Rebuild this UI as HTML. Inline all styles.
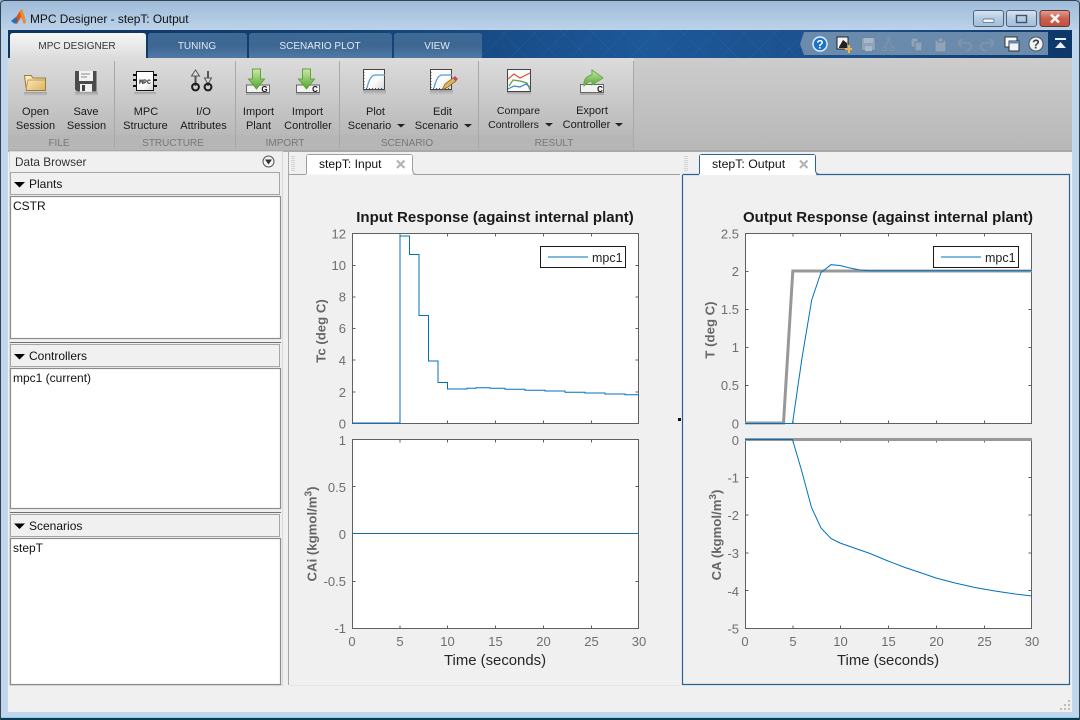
<!DOCTYPE html>
<html><head><meta charset="utf-8"><title>MPC Designer - stepT: Output</title>
<style>
html,body{margin:0;padding:0;background:#c0d6ec;width:1080px;height:720px;overflow:hidden}
svg{display:block;position:absolute;left:0;top:0}
text{font-family:"Liberation Sans",sans-serif}
.rb{font-size:11px;fill:#1a1a1a;text-anchor:middle}
.gl{font-size:10px;fill:#777;text-anchor:middle}
.tb{font-size:10px;fill:#e2eaf3;text-anchor:middle}
.t{font-size:13px;fill:#6e6e6e}
.e{text-anchor:end}
.m{text-anchor:middle}
.xl{font-size:14.9px;fill:#262626;text-anchor:middle}
.ti{font-size:15px;font-weight:bold;fill:#1a1a1a;text-anchor:middle}
.yl{font-size:13.2px;font-weight:bold;fill:#666;text-anchor:middle}
.p{font-size:12px;fill:#111}
.ax{fill:#fff;stroke:#606060;stroke-width:1}
.tk{stroke:#606060;stroke-width:1;fill:none}
.c{fill:none;stroke:#0072bd;stroke-width:1}
.g{fill:none;stroke:#989898;stroke-width:3}
.lb{fill:#fff;stroke:#1a1a1a;stroke-width:1}
.hd{fill:#f0f0f0;stroke:#a6a6a6;stroke-width:1}
.ls{fill:#fff;stroke:#8c8c8c;stroke-width:1.2}
.qg{fill:#8fa4ba;stroke:#6b839c;stroke-width:1}
</style></head><body>
<svg width="1080" height="720" viewBox="0 0 1080 720" xmlns="http://www.w3.org/2000/svg">
<defs>
<linearGradient id="tt" x1="0" y1="0" x2="0" y2="1"><stop offset="0" stop-color="#9fbbd9"/><stop offset="1" stop-color="#bbd2e9"/></linearGradient>
<linearGradient id="strip" x1="0" y1="0" x2="1" y2="0"><stop offset="0" stop-color="#0c3560"/><stop offset=".3" stop-color="#123f73"/><stop offset=".6" stop-color="#1d5899"/><stop offset=".8" stop-color="#1b4f8b"/><stop offset="1" stop-color="#0d3768"/></linearGradient>
<linearGradient id="rib" x1="0" y1="0" x2="0" y2="1"><stop offset="0" stop-color="#dcdcdc"/><stop offset="1" stop-color="#b2b2b2"/></linearGradient>
<linearGradient id="at" x1="0" y1="0" x2="0" y2="1"><stop offset="0" stop-color="#f6f6f6"/><stop offset="1" stop-color="#dddddd"/></linearGradient>
<linearGradient id="it" x1="0" y1="0" x2="0" y2="1"><stop offset="0" stop-color="#3f6a96"/><stop offset=".5" stop-color="#3d6692"/><stop offset="1" stop-color="#4f7aa5"/></linearGradient>
<linearGradient id="fo" x1="0" y1="0" x2="1" y2="1"><stop offset="0" stop-color="#fff6cf"/><stop offset="1" stop-color="#dcb25c"/></linearGradient>
<linearGradient id="ga" x1="0" y1="0" x2="0" y2="1"><stop offset="0" stop-color="#cfe8a8"/><stop offset="1" stop-color="#4fa52f"/></linearGradient>
<linearGradient id="bx" x1="0" y1="0" x2="1" y2="1"><stop offset="0" stop-color="#ffffff"/><stop offset=".6" stop-color="#fafafa"/><stop offset="1" stop-color="#d6d6d6"/></linearGradient>
<linearGradient id="wb" x1="0" y1="0" x2="0" y2="1"><stop offset="0" stop-color="#d7e4f1"/><stop offset=".5" stop-color="#b5cbe1"/><stop offset="1" stop-color="#a3bfdb"/></linearGradient>
<linearGradient id="wc" x1="0" y1="0" x2="0" y2="1"><stop offset="0" stop-color="#e3a091"/><stop offset=".5" stop-color="#c9604e"/><stop offset="1" stop-color="#c0523f"/></linearGradient>
<linearGradient id="sh" x1="0" y1="0" x2="0" y2="1"><stop offset="0" stop-color="#000" stop-opacity=".22"/><stop offset="1" stop-color="#000" stop-opacity="0"/></linearGradient>
</defs>

<!-- window frame -->
<rect x="0" y="0" width="1080" height="720" fill="#bfd6ec"/>
<rect x="0" y="0" width="1080" height="30" fill="url(#tt)"/>
<rect x="0" y="718" width="1080" height="2" fill="#123a52"/>
<path d="M0.5 720V4Q0.5 1 4 0.5H1076Q1079.5 1 1079.5 4V720" fill="none" stroke="#33424f" stroke-width="1"/>
<rect x="1" y="717" width="1078" height="1" fill="#7fd3ea"/>
<rect x="8" y="150" width="1064" height="562" fill="#f0f0f0"/>

<!-- title bar -->
<path d="M11 21L16 17L20 11L22 9L26 22L24 24L21 17L17 24Z" fill="#d9541e"/>
<path d="M20 11L22 9L26 22L24 24L21 17Z" fill="#ef8a2a"/>
<path d="M11 21L16 17L18 20L15 24Z" fill="#2f6ea8"/>
<text x="30" y="23" style="font-size:11.9px" fill="#111">MPC Designer - stepT: Output</text>

<rect x="973.5" y="10.5" width="30" height="16" rx="2.5" fill="url(#wb)" stroke="#4f6478"/>
<rect x="983" y="19" width="11" height="3.5" rx="1" fill="#f4f7fa" stroke="#50667c" stroke-width=".7"/>
<rect x="1006.5" y="10.5" width="30" height="16" rx="2.5" fill="url(#wb)" stroke="#4f6478"/>
<rect x="1016.5" y="15.5" width="10" height="7" fill="none" stroke="#3f5468" stroke-width="1.4"/>
<rect x="1040" y="10.5" width="29.5" height="16" rx="2.5" fill="url(#wc)" stroke="#5d3a38"/>
<path d="M1051 14.5L1059 22.5M1059 14.5L1051 22.5" stroke="#f6f6f6" stroke-width="2.6"/>

<!-- blue strip -->
<rect x="8" y="30" width="1064" height="28" fill="url(#strip)"/>
<g stroke="#3a72ad" stroke-width=".5" fill="none" opacity=".5">
<path d="M480 58L508 30M510 58L538 30M540 58L568 30M570 58L598 30M600 58L628 30M630 58L658 30M660 58L688 30M690 58L718 30M720 58L748 30M750 58L778 30M780 58L808 30"/>
<path d="M500 30L528 58M530 30L558 58M560 30L588 58M590 30L618 58M620 30L648 58M650 30L678 58M680 30L708 58M710 30L738 58M740 30L768 58M770 30L798 58"/>
</g>

<!-- tabs -->
<path d="M148 58V36Q148 33 151 33H244Q247 33 247 36V58Z" fill="url(#it)"/>
<path d="M249 58V36Q249 33 252 33H389Q392 33 392 36V58Z" fill="url(#it)"/>
<path d="M394 58V36Q394 33 397 33H479Q482 33 482 36V58Z" fill="url(#it)"/>
<path d="M10 58V36Q10 33 13 33H143Q146 33 146 36V58Z" fill="url(#at)"/>
<text x="77" y="49" class="tb" style="fill:#333">MPC DESIGNER</text>
<text x="197" y="49" class="tb">TUNING</text>
<text x="320" y="49" class="tb">SCENARIO PLOT</text>
<text x="437" y="49" class="tb">VIEW</text>

<!-- QAT -->
<path d="M800 44L804 32H1048V55H804Z" fill="#6b8bad"/>
<circle cx="820" cy="44" r="7" fill="#1b74c6" stroke="#e8f2fb" stroke-width="1.4"/>
<text x="820" y="48.5" class="m" style="font-size:12px;font-weight:bold" fill="#fff">?</text>
<rect x="837" y="37" width="11" height="12" fill="#f2f2f2" stroke="#222" stroke-width="1"/>
<path d="M839 47L843 40L847 43V48H839Z" fill="#222"/>
<path d="M845 48H848V45H850V48H852V50H850V53H848V50H845Z" fill="#f0b54a"/>
<path d="M861.5 37.5H875.5V50.5H861.5Z" class="qg"/><rect x="864" y="38" width="9" height="5" fill="#a8b8c9"/><rect x="865" y="46" width="7" height="5" fill="#a8b8c9"/>
<path d="M890 37L885 47M887 37L892 47" stroke="#7f95ab" stroke-width="1.2" fill="none"/><circle cx="884.5" cy="49" r="2" fill="none" stroke="#7f95ab"/><circle cx="892.5" cy="49" r="2" fill="none" stroke="#7f95ab"/>
<rect x="911" y="38" width="7" height="9" class="qg"/><rect x="915" y="42" width="7" height="9" class="qg"/>
<rect x="935" y="40" width="11" height="12" class="qg"/><rect x="938" y="38" width="5" height="4" class="qg"/>
<path d="M958 43H968Q971 43 971 47Q971 50 966 51M958 43L962 39M958 43L962 47" fill="none" stroke="#7f95ab" stroke-width="1.8"/>
<path d="M994 43H984Q981 43 981 47Q981 50 986 51M994 43L990 39M994 43L990 47" fill="none" stroke="#7f95ab" stroke-width="1.8"/>
<rect x="1005" y="37" width="12" height="10" fill="#fff" stroke="#333"/>
<rect x="1009" y="41" width="10" height="10" fill="#eef3f8" stroke="#333"/><rect x="1009" y="41" width="10" height="2.5" fill="#5c87b8"/>
<circle cx="1036" cy="44" r="7" fill="#f2f2f2" stroke="#4a5563" stroke-width="1"/>
<text x="1036" y="48.5" class="m" style="font-size:12.5px;font-weight:bold" fill="#33404e">?</text>
<rect x="1055" y="38" width="11" height="2" fill="#e8edf3"/><path d="M1055 48L1060.5 42L1066 48Z" fill="#e8edf3"/>

<!-- ribbon -->
<rect x="8" y="58" width="1064" height="92" fill="url(#rib)"/>
<rect x="8" y="135" width="625" height="15" fill="#b6b6b6"/>
<rect x="634" y="58" width="438" height="92" fill="#bdbdbd"/>
<rect x="634" y="58" width="438" height="92" fill="url(#rib)" opacity=".5"/>
<rect x="8" y="150" width="1064" height="2" fill="#a9a9a9"/>
<g stroke="#a8a8a8" stroke-width="1"><path d="M114.5 61V148M235.5 61V148M339.5 61V148M478.5 61V148M633.5 61V148"/></g>

<!-- ribbon icons -->
<rect x="24" y="92" width="23" height="4" fill="url(#sh)"/>
<path d="M24.5 75.5H31L33 78H45.5V90.5H26.5Z" fill="url(#fo)" stroke="#9c7a3c"/>
<path d="M26 90L28 80H45.5" fill="none" stroke="#c49c4e"/>

<rect x="75" y="92" width="23" height="4" fill="url(#sh)"/>
<path d="M75 71H96.5V91.5H77L75 89.5Z" fill="#4c4c4c"/>
<rect x="79" y="71" width="14" height="10" fill="#f2f2f2"/>
<path d="M81 74H90M81 77H87" stroke="#8a8a8a"/>
<rect x="80" y="84" width="12" height="7.5" fill="#f2f2f2"/><rect x="82" y="85" width="3" height="6" fill="#444"/>

<rect x="134" y="92" width="22" height="3" fill="url(#sh)"/>
<rect x="136.5" y="71.5" width="17" height="19" fill="url(#bx)" stroke="#111"/>
<path d="M133 75H136M133 80H136M133 86H136M154 75H157M154 80H157M154 86H157" stroke="#111" stroke-width="2"/>
<text x="145" y="84" class="m" style="font-size:6.5px;font-weight:bold;font-family:'Liberation Mono',monospace" fill="#111">MPC</text>

<path d="M195.5 86V73M208 86V71" stroke="#555" stroke-width="2"/>
<path d="M191.5 76L195.5 70L199.5 76Z" fill="#ddd" stroke="#555"/>
<path d="M204.5 78L208 84L211.5 78Z" fill="#ddd" stroke="#555"/>
<circle cx="195.5" cy="87" r="3.4" fill="none" stroke="#1a1a1a" stroke-width="2"/>
<circle cx="208" cy="87" r="3.4" fill="none" stroke="#1a1a1a" stroke-width="2"/>

<rect x="246.5" y="85" width="23" height="7.5" fill="#f2f2f2" stroke="#666"/>
<rect x="246" y="93" width="24" height="2" fill="#888" opacity=".5"/>
<path d="M252.5 69H260.500V79H264.500L256.5 89L248.500 79H252.500Z" fill="url(#ga)" stroke="#5ea33c"/>
<text x="264.500" y="92" class="m" style="font-size:8px;font-weight:bold" fill="#111">G</text>
<rect x="296.500" y="85" width="23" height="7.5" fill="#f2f2f2" stroke="#666"/>
<rect x="296" y="93" width="24" height="2" fill="#888" opacity=".5"/>
<path d="M302.500 69H310.500V79H314.500L306.500 89L298.500 79H302.500Z" fill="url(#ga)" stroke="#5ea33c"/>
<text x="315" y="92" class="m" style="font-size:8px;font-weight:bold" fill="#111">C</text>

<rect x="363" y="90" width="23" height="5" fill="url(#sh)"/>
<rect x="363.5" y="69.5" width="21" height="20" fill="url(#bx)" stroke="#444"/>
<path d="M367 88Q370 75 375 75H385" fill="none" stroke="#5b9bd5" stroke-width="1.3"/>
<path d="M364 72V88M366 88.500H384" stroke="#555" stroke-dasharray="1 2" fill="none"/>

<rect x="430" y="90" width="23" height="5" fill="url(#sh)"/>
<rect x="430.5" y="69.5" width="21" height="20" fill="url(#bx)" stroke="#444"/>
<path d="M434 88Q437 75 442 75H452" fill="none" stroke="#5b9bd5" stroke-width="1.3"/>
<path d="M431 72V88M433 88.500H449" stroke="#555" stroke-dasharray="1 2" fill="none"/>
<path d="M442 90L445 84L453 78L456 81L448 87Z" fill="#e2b45a" stroke="#8a6a32" stroke-width=".8"/>
<path d="M453 78L456 81L458 79L455 76Z" fill="#c9485a"/>

<rect x="507" y="92" width="24" height="3" fill="url(#sh)"/>
<rect x="507.500" y="69.500" width="23" height="22" fill="#fafafa" stroke="#444"/>
<path d="M508 79L514 74L520 78L530 73" fill="none" stroke="#e0533d" stroke-width="1.2"/>
<path d="M509 86L513 80L520 81L527 83L530 90" fill="none" stroke="#5fa04e" stroke-width="1.2"/>
<path d="M508 89L514 86L520 87L526 84L530 87" fill="none" stroke="#3f84cc" stroke-width="1.2"/>

<rect x="580.500" y="84.500" width="23" height="8" fill="#f2f2f2" stroke="#666"/>
<rect x="580" y="93" width="24" height="2" fill="#888" opacity=".5"/>
<path d="M584 86Q583 77 592 75V70L603 78L592 85V81Q588 81 584 86Z" fill="url(#ga)" stroke="#6aa84a"/>
<text x="600" y="92" class="m" style="font-size:8px;font-weight:bold" fill="#111">C</text>

<!-- ribbon text -->
<text x="35.500" y="115" class="rb">Open</text><text x="35.500" y="129" class="rb">Session</text>
<text x="86" y="115" class="rb">Save</text><text x="86.500" y="129" class="rb">Session</text>
<text x="146" y="115" class="rb">MPC</text><text x="145.500" y="129" class="rb">Structure</text>
<text x="203.500" y="115" class="rb">I/O</text><text x="203.500" y="129" class="rb">Attributes</text>
<text x="258.500" y="115" class="rb">Import</text><text x="258.500" y="129" class="rb">Plant</text>
<text x="307.500" y="115" class="rb">Import</text><text x="308" y="129" class="rb">Controller</text>
<text x="375.500" y="115" class="rb">Plot</text><text x="369.500" y="129" class="rb">Scenario</text>
<text x="442.500" y="115" class="rb">Edit</text><text x="436.500" y="129" class="rb">Scenario</text>
<text x="518.500" y="114" class="rb" style="font-size:10.500px">Compare</text><text x="513.500" y="128" class="rb" style="font-size:10.500px">Controllers</text>
<text x="592" y="114" class="rb">Export</text><text x="586.500" y="128" class="rb">Controller</text>
<g fill="#222"><path d="M397 124H405L401 127.500Z"/><path d="M464 124H472L468 127.500Z"/><path d="M545 123H553L549 126.500Z"/><path d="M615 123H623L619 126.500Z"/></g>
<text x="59" y="146" class="gl">FILE</text>
<text x="173" y="146" class="gl">STRUCTURE</text>
<text x="285" y="146" class="gl">IMPORT</text>
<text x="407" y="146" class="gl">SCENARIO</text>
<text x="554" y="146" class="gl">RESULT</text>

<!-- data browser -->
<rect x="9.500" y="151.500" width="273" height="534" fill="#f0f0f0" stroke="#d8d8d8"/>
<text x="15" y="166" style="font-size:11.800px" fill="#333">Data Browser</text>
<circle cx="268.500" cy="161.500" r="5.500" fill="#f4f4f4" stroke="#555"/>
<path d="M265 159.500H272L268.500 164.500Z" fill="#333"/>

<rect x="10.500" y="172.500" width="269" height="22" class="hd"/>
<path d="M14 182H25L19.500 187.500Z" fill="#000"/>
<text x="29" y="188" class="p">Plants</text>
<rect x="10.500" y="196.500" width="270" height="142" class="ls"/>
<text x="13" y="210" class="p">CSTR</text>

<path d="M10 342.500H281" stroke="#707070"/>
<rect x="10.500" y="344.500" width="269" height="22" class="hd"/>
<path d="M14 354H25L19.500 359.500Z" fill="#000"/>
<text x="29" y="360" class="p">Controllers</text>
<rect x="10.500" y="368.500" width="270" height="140" class="ls"/>
<text x="13" y="382" class="p">mpc1 (current)</text>

<path d="M10 512.500H281" stroke="#707070"/>
<rect x="10.500" y="514.500" width="269" height="22" class="hd"/>
<path d="M14 523.500H25L19.500 529Z" fill="#000"/>
<text x="29" y="530" class="p">Scenarios</text>
<rect x="10.500" y="538.500" width="270" height="146" class="ls"/>
<text x="13" y="552" class="p">stepT</text>

<!-- left doc panel -->
<path d="M288.500 152V685" stroke="#a8a8a8"/>
<path d="M289 685.500H680" stroke="#e4e4e4"/>
<path d="M292 156V172M294 156V172" stroke="#b8b8b8" stroke-dasharray="1 1"/>
<path d="M289 174.500H306M412 174.500H680" stroke="#a0a0a0"/>
<path d="M306.500 174V157Q306.500 154.500 309 154.500H410Q412.500 154.500 412.500 157V169Q412.500 174.500 417 174.500" fill="#fff" stroke="#a0a0a0"/>
<rect x="307" y="155" width="105" height="19.500" fill="#fff"/>
<text x="319" y="168" style="font-size:12.100px" fill="#111">stepT: Input</text>
<path d="M397 160.500L404.500 168M404.500 160.500L397 168" stroke="#b4b4b4" stroke-width="2.200"/>

<!-- right doc panel -->
<path d="M685 156V172M687 156V172" stroke="#b8b8b8" stroke-dasharray="1 1"/>
<path d="M682.500 175V684.500H1069.500V174.500H816M699 174.500H682.500" fill="none" stroke="#2a6296" stroke-width="1.200"/>
<path d="M699.500 174V157Q699.500 154.500 702 154.500H813Q815.500 154.500 815.500 157V170Q815.500 174.500 820 174.500" fill="#fff" stroke="#2a6296"/>
<rect x="700" y="155" width="115" height="20" fill="#fff"/>
<text x="712" y="168" style="font-size:12.300px" fill="#111">stepT: Output</text>
<path d="M800 160.500L807.500 168M807.500 160.500L800 168" stroke="#b4b4b4" stroke-width="2.200"/>
<rect x="678" y="418" width="3" height="3" fill="#111"/>

<!-- LEFT AXES top -->
<text x="495" y="222" class="ti">Input Response (against internal plant)</text>
<rect x="352.500" y="233.500" width="286" height="190" class="ax"/>
<path class="tk" d="M400 233.500v3M447.500 233.500v3M495.500 233.500v3M543.500 233.500v3M591.500 233.500v3M400 423.500v-3M447.500 423.500v-3M495.500 423.500v-3M543.500 423.500v-3M591.500 423.500v-3M352.500 265.500h3M352.500 297h3M352.500 328.500h3M352.500 360h3M352.500 392h3M638.500 265.500h-3M638.500 297h-3M638.500 328.500h-3M638.500 360h-3M638.500 392h-3"/>
<path class="c" d="M352 423H400V236H409.500V254.500H419V315.500H428.500V361H438V382.500H447.500V389H467V388.300H476V387.800H490V388.200H505V389.300H525V390.200H545V391H565V392.200H585V393H605V394H625V394.800H639"/>
<rect x="540.500" y="246.500" width="85" height="21" class="lb"/>
<path d="M548 257H588" stroke="#0072bd" stroke-width="1"/>
<text x="592" y="262" style="font-size:12.500px" fill="#222">mpc1</text>
<g class="t e"><text x="346" y="238.500">12</text><text x="346" y="270">10</text><text x="346" y="301.500">8</text><text x="346" y="333">6</text><text x="346" y="365">4</text><text x="346" y="397">2</text><text x="346" y="428.500">0</text></g>
<text transform="translate(325.500,331) rotate(-90)" class="yl">Tc (deg C)</text>

<!-- LEFT AXES bottom -->
<rect x="352.500" y="439.500" width="286" height="189" class="ax"/>
<path class="tk" d="M400 439.500v3M447.500 439.500v3M495.500 439.500v3M543.500 439.500v3M591.500 439.500v3M400 628.500v-3M447.500 628.500v-3M495.500 628.500v-3M543.500 628.500v-3M591.500 628.500v-3M352.500 486.500h3M352.500 581.500h3M638.500 486.500h-3M638.500 581.500h-3"/>
<path d="M352 533.500H639" stroke="#1c6a9e" stroke-width="1"/>
<g class="t e"><text x="346" y="445">1</text><text x="346" y="492">0.5</text><text x="346" y="539">0</text><text x="346" y="586">-0.5</text><text x="346" y="633">-1</text></g>
<g class="t m"><text x="352" y="646">0</text><text x="400" y="646">5</text><text x="447.500" y="646">10</text><text x="495.500" y="646">15</text><text x="543.500" y="646">20</text><text x="591.500" y="646">25</text><text x="639" y="646">30</text></g>
<text transform="translate(316.500,534) rotate(-90)" class="yl">CAi (kgmol/m<tspan dy="-5" style="font-size:10px">3</tspan><tspan dy="5">)</tspan></text>
<text x="495" y="665" class="xl">Time (seconds)</text>

<!-- RIGHT AXES top -->
<text x="888" y="222" class="ti">Output Response (against internal plant)</text>
<rect x="745.500" y="233.500" width="286" height="190" class="ax"/>
<path class="tk" d="M793 233.500v3M840.500 233.500v3M888.500 233.500v3M936.500 233.500v3M984.500 233.500v3M793 423.500v-3M840.500 423.500v-3M888.500 423.500v-3M936.500 423.500v-3M984.500 423.500v-3M745.500 271.500h3M745.500 309.500h3M745.500 347.500h3M745.500 385.500h3M1031.500 271.500h-3M1031.500 309.500h-3M1031.500 347.500h-3M1031.500 385.500h-3"/>
<path class="g" d="M745 423H783.500L792.800 271H1032"/>
<path class="c" d="M745 423.500H792.500L802 358L811.700 300L821 272.500L831 264.700L840 265.500L850 268L860 270L870 270.800H1032"/>
<rect x="933.500" y="246.500" width="85" height="21" class="lb"/>
<path d="M941 257H981" stroke="#0072bd" stroke-width="1"/>
<text x="985" y="262" style="font-size:12.500px" fill="#222">mpc1</text>
<g class="t e"><text x="739" y="238.500">2.5</text><text x="739" y="276">2</text><text x="739" y="314">1.5</text><text x="739" y="352">1</text><text x="739" y="390">0.5</text><text x="739" y="428.500">0</text></g>
<text transform="translate(714.500,330) rotate(-90)" class="yl">T (deg C)</text>

<!-- RIGHT AXES bottom -->
<rect x="745.500" y="439.500" width="286" height="189" class="ax"/>
<path class="tk" d="M793 439.500v3M840.500 439.500v3M888.500 439.500v3M936.500 439.500v3M984.500 439.500v3M793 628.500v-3M840.500 628.500v-3M888.500 628.500v-3M936.500 628.500v-3M984.500 628.500v-3M745.500 477.500h3M745.500 515h3M745.500 553h3M745.500 590.500h3M1031.500 477.500h-3M1031.500 515h-3M1031.500 553h-3M1031.500 590.500h-3"/>
<path class="g" d="M745 439.500H1032"/>
<path class="c" d="M745 439.500H792.500L802 472L811.500 507.500L821 528L831 538.500L840 543L850 546.500L860 550L870 553.500L888 561L905 567.500L920 572.500L936 578L955 583L975 587.500L995 591L1015 594L1032 596"/>
<g class="t e"><text x="739" y="445">0</text><text x="739" y="482.500">-1</text><text x="739" y="520">-2</text><text x="739" y="558">-3</text><text x="739" y="596">-4</text><text x="739" y="633.500">-5</text></g>
<g class="t m"><text x="745" y="646">0</text><text x="793" y="646">5</text><text x="840.500" y="646">10</text><text x="888.500" y="646">15</text><text x="936.500" y="646">20</text><text x="984.500" y="646">25</text><text x="1032" y="646">30</text></g>
<text transform="translate(721,535) rotate(-90)" class="yl">CA (kgmol/m<tspan dy="-5" style="font-size:10px">3</tspan><tspan dy="5">)</tspan></text>
<text x="888" y="665" class="xl">Time (seconds)</text>

<!-- grip -->
<g fill="#bdbdb0"><rect x="1068" y="700" width="2" height="2"/><rect x="1064" y="704" width="2" height="2"/><rect x="1068" y="704" width="2" height="2"/><rect x="1060" y="708" width="2" height="2"/><rect x="1064" y="708" width="2" height="2"/><rect x="1068" y="708" width="2" height="2"/></g>
</svg>
</body></html>
